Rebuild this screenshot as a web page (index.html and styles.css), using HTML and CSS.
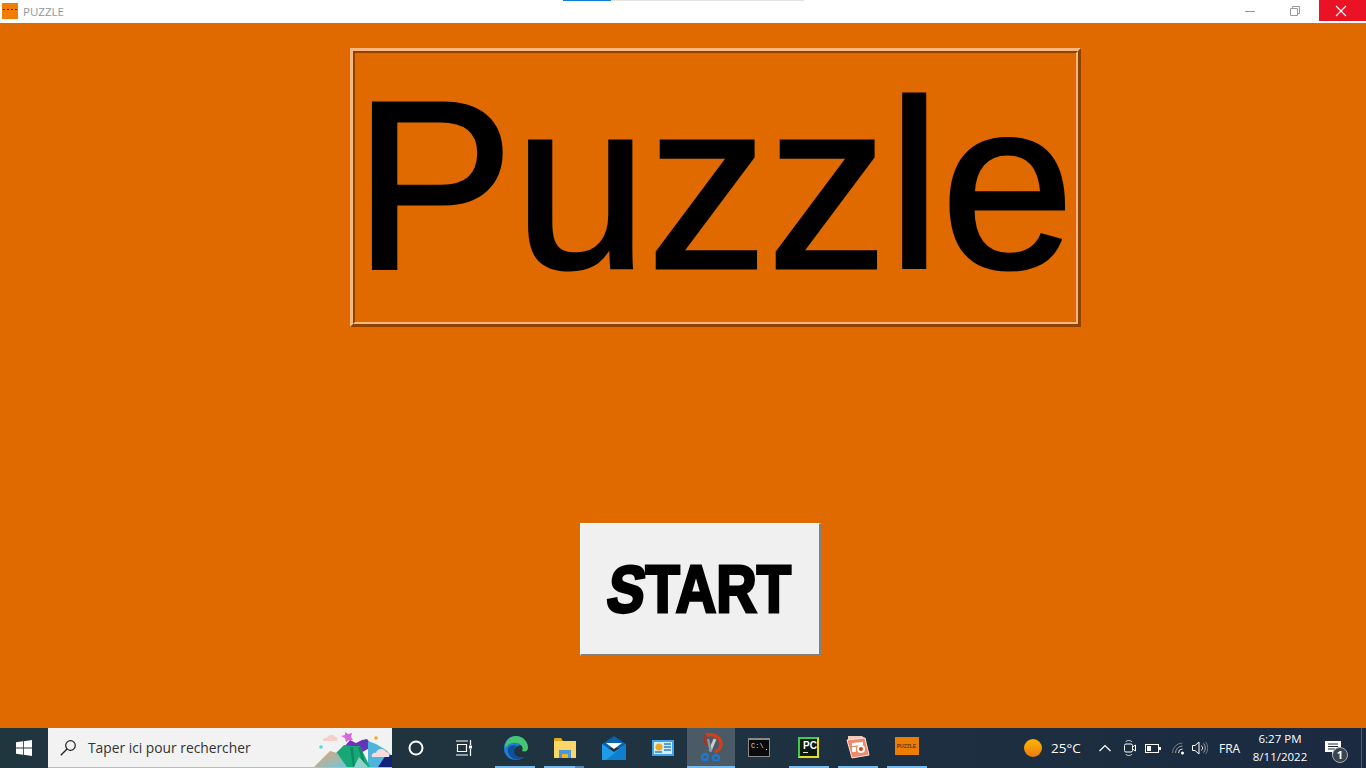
FILE: index.html
```html
<!DOCTYPE html>
<html lang="en">
<head>
    <meta charset="UTF-8">
    <meta name="viewport" content="width=device-width, initial-scale=1.0">
    <title>PUZZLE</title>
    <link rel="stylesheet" href="styles.css">
</head>
<body>
    <header class="titlebar">
        <div class="app-icon"><i></i><i></i><i></i><i></i></div>
        <span class="app-title">PUZZLE</span>
        <div class="progress"><span class="progress-done"></span></div>
        <div class="win-controls">
            <button class="win-btn" aria-label="Minimize"><svg width="12" height="12" viewBox="0 0 12 12"><path d="M1 6.500h10" stroke="#999" fill="none"/></svg></button>
            <button class="win-btn" aria-label="Restore"><svg width="12" height="12" viewBox="0 0 12 12"><path d="M1.500 3.500h7v7h-7zM3.500 3.500V1.500h7v7H8.500" stroke="#999" fill="none"/></svg></button>
            <button class="win-btn win-close" aria-label="Close"><svg width="12" height="12" viewBox="0 0 12 12"><path d="M1 1l10 10M11 1L1 11" stroke="#fff" stroke-width="1.100" fill="none"/></svg></button>
        </div>
    </header>

    <main class="game">
        <div class="title-box">
            <h1 class="title-inner">Puzzle</h1>
        </div>
        <button class="start-btn"><span class="start-text"><span class="start-s">S</span>TART</span></button>
    </main>

    <footer class="taskbar">
        <div class="tb-start">
            <svg width="16" height="16" viewBox="0 0 16 16"><path fill="#fff" d="M0 2.300L7 1.300V7.600H0zM7.800 1.200L16 0V7.600H7.800zM0 8.400H7V14.700L0 13.700zM7.800 8.400H16V16L7.800 14.800z"/></svg>
        </div>
        <div class="search">
            <svg class="search-icon" width="16" height="16" viewBox="0 0 16 16"><circle cx="10.500" cy="5.500" r="4.800" fill="none" stroke="#222" stroke-width="1.200"/><path d="M7 9L.8 15.300" stroke="#222" stroke-width="1.300"/></svg>
            <span class="search-text">Taper ici pour rechercher</span>
            <svg class="search-art" width="78" height="40" viewBox="0 0 78 40">
                <defs>
                    <linearGradient id="slope" x1="0" y1="0" x2="1" y2="1">
                        <stop offset="0" stop-color="#eba070"/>
                        <stop offset="1" stop-color="#6fc8d8"/>
                    </linearGradient>
                    <linearGradient id="peak" x1="0" y1="0" x2="1" y2="0">
                        <stop offset="0" stop-color="#7a30c0"/>
                        <stop offset="1" stop-color="#5a38b0"/>
                    </linearGradient>
                </defs>
                <path fill="#f3cfcb" d="M9 14c0-3 2-4 4-3 2-4 7-4 8-1 2 0 3 2 2 4z"/>
                <path fill="#d868e0" d="M31 5l3 2 4-1-1 4 2 3-4 0-3 2-1-4-4-2 4-1z"/>
                <circle cx="62" cy="11" r="1.800" fill="#f5a623"/>
                <circle cx="7" cy="20" r="1.800" fill="#4fd8ec"/>
                <path fill="url(#peak)" d="M30 20l6-7 6 3 6-3 5-1 6 7-14 8z"/>
                <path fill="#4eb4dc" d="M54 14l8 3 10 6 6 6v11H54z"/>
                <path fill="#13237a" d="M64 40l8-12 6 0v12z"/>
                <path fill="#18a878" d="M21 27l9-9 8 1 8 0 10 21H30z"/>
                <path fill="#0f8a60" d="M36 20l3 20h2l-2-20zM44 20l6 20h2l-5-20z"/>
                <path fill="url(#slope)" d="M0 40L16 24l7 2 10 14z"/>
                <path fill="#8fd4cc" d="M40 40l5-10 9 10z"/>
                <path fill="#f6dcdc" d="M58 30c-1-3 2-5 4-4 1-5 9-5 10-1 3 0 4 3 3 5z"/>
            </svg>
        </div>
        <div class="tb-cell">
            <svg width="16" height="16" viewBox="0 0 16 16"><circle cx="8" cy="8" r="6.500" fill="none" stroke="#fff" stroke-width="2"/></svg>
        </div>
        <div class="tb-cell tb-taskview">
            <svg width="18" height="16" viewBox="0 0 18 16"><path d="M1 1h12M1 15h12M2.500 4.500h9v7h-9z" stroke="#fff" fill="none" stroke-width="1.200"/><path d="M15.500 0v5M15.500 9v7" stroke="#fff" stroke-width="1.200"/><rect x="14" y="5.500" width="3" height="3" fill="#fff"/></svg>
        </div>

        <div class="tb-apps">
            <div class="app app-open">
                <svg width="24" height="24" viewBox="0 0 24 24"><path fill="#1c7fd0" d="M12 0C5 0 0 5 0 12c0 7 5 12 12 12 3 0 6-1 8-3-4 1-9 0-10-4-1-3 1-6 4-7 3-1 6 0 10 2 0-7-5-12-12-12z"/><path fill="#46c66e" d="M12 0c6 0 12 5 12 12 0 3-3 4-6 3 1-2 1-4-1-6C14 6 8 6 4 9 3 10 2 11 1 12 1 5 6 0 12 0z"/><path fill="#0f4e9e" d="M10 17c1 4 6 5 10 4-4 4-11 3-14-1-3-4-3-8 0-10 2-1 6-1 7 0-2 1-4 4-3 7z"/></svg>
            </div>
            <div class="app app-open app-stack">
                <svg width="22" height="20" viewBox="0 0 22 20"><path fill="#e0a81c" d="M0 1a1 1 0 011-1h6l2 3h-9z"/><path fill="#fbd667" d="M0 3h22v17H0z"/><path fill="#4a98dc" d="M5 20v-8h12v8h-3v-4H8v4z"/><path fill="#f0b429" d="M8 16h6v4H8z"/></svg>
            </div>
            <div class="app">
                <svg width="24" height="24" viewBox="0 0 24 24"><path fill="#0a62ac" d="M12 0l12 8v4H0V8z"/><path fill="#fff" d="M4 7h16l-8 6z"/><path fill="#1f9be8" d="M0 8l12 8 12-8v16H0z"/><path fill="#0e7fcf" d="M24 8v16H4z"/></svg>
            </div>
            <div class="app">
                <svg width="22" height="18" viewBox="0 0 22 18"><rect width="22" height="16" y="1" fill="#3fa4e4"/><rect x="2" y="3" width="18" height="12" fill="#d5ecfa"/><circle cx="7" cy="8" r="3.500" fill="#f0a820"/><path d="M12 5h7M12 8h7M12 11h7M3 13h7" stroke="#2a82c8" stroke-width="1.500"/></svg>
            </div>
            <div class="app app-active">
                <svg width="24" height="28" viewBox="0 0 24 28"><path fill="none" stroke="#d0401c" stroke-width="3.500" d="M7 2c8-2 15 3 15 9 0 4-3 7-6 8"/><path fill="none" stroke="#b03018" stroke-width="2.500" d="M7 3C5 6 6 10 8 12"/><path stroke="#c8ccd0" stroke-width="3" d="M16 6l-5 12"/><path stroke="#8a9298" stroke-width="2.500" d="M9 6l3 13"/><circle cx="6" cy="24" r="3" fill="none" stroke="#1f78d0" stroke-width="2.400"/><circle cx="17" cy="25" r="3" fill="none" stroke="#1f78d0" stroke-width="2.400"/></svg>
            </div>
            <div class="app">
                <div class="cmd-icon"><span class="cmd-text">C:\</span><i></i></div>
            </div>
            <div class="app app-open">
                <div class="pc-icon"><span class="pc-text">PC</span><i></i></div>
            </div>
            <div class="app app-open">
                <svg class="ppt-icon" width="24" height="24" viewBox="0 0 24 24"><path fill="#f5c8b8" d="M2 1h14l4 3v4H2z"/><path fill="#f08a6a" stroke="#fbe2d8" d="M1 5l18-2 4 17-17 3z"/><path fill="#fff" d="M6 8l11-1v3l-11 1zM6 12h4v5H6z"/><circle cx="15" cy="14" r="4" fill="#fff"/><circle cx="15" cy="14" r="2" fill="#d8401c"/></svg>
            </div>
            <div class="app app-open">
                <div class="puzzle-icon"><span class="puzzle-text">PUZZLE</span></div>
            </div>
        </div>

        <div class="tray">
            <span class="sun"></span>
            <span class="temp">25°C</span>
            <svg class="tray-chevron" width="12" height="8" viewBox="0 0 12 8"><path d="M.5 7L6 1.500 11.500 7" fill="none" stroke="#fff" stroke-width="1.200"/></svg>
            <svg class="tray-meet" width="12" height="18" viewBox="0 0 12 18"><path d="M2 3c0-2 5-2 6 0M2 15c0 2 5 2 6 0" fill="none" stroke="#ddd"/><rect x=".5" y="5" width="8" height="8" rx="1.500" fill="none" stroke="#fff"/><path d="M8.500 8l3-2v6l-3-2z" fill="none" stroke="#fff"/></svg>
            <svg class="tray-battery" width="16" height="9" viewBox="0 0 16 9"><rect x=".5" y=".5" width="13" height="8" fill="none" stroke="#fff"/><rect x="2" y="2" width="4" height="5" fill="#fff"/><rect x="14" y="3" width="2" height="3" fill="#fff"/></svg>
            <svg class="tray-wifi" width="14" height="14" viewBox="0 0 14 14"><circle cx="10.500" cy="12" r="1.500" fill="#fff"/><path d="M6.500 12a4 4 0 014-4" fill="none" stroke="#ddd"/><path d="M3.500 12a7 7 0 017-7" fill="none" stroke="#999"/><path d="M.5 12a10 10 0 0110-10" fill="none" stroke="#777"/></svg>
            <svg class="tray-sound" width="16" height="14" viewBox="0 0 16 14"><path d="M.5 4.500h2.500l4-3.500v12l-4-3.500H.5z" fill="none" stroke="#fff"/><path d="M9.500 4.500a3.500 3.500 0 010 5" fill="none" stroke="#ddd"/><path d="M11.500 2.500a6.500 6.500 0 010 9" fill="none" stroke="#aaa"/><path d="M13.500 1a9 9 0 010 12" fill="none" stroke="#777"/></svg>
            <span class="lang">FRA</span>
            <div class="clock"><span>6:27 PM</span><span>8/11/2022</span></div>
            <div class="notif">
                <svg width="16" height="15" viewBox="0 0 16 15"><path fill="#fff" d="M0 0h16v11h-6l-3 4v-4H0z"/><path d="M3 3h10M3 5.500h10M3 8h7" stroke="#1c2b40"/></svg>
                <span class="notif-badge">1</span>
            </div>
            <div class="show-desktop"></div>
        </div>
    </footer>
</body>
</html>
```

FILE: styles.css
```css
* {
    box-sizing: border-box;
}

html, body {
    height: 100%;
}

body {
    margin: 0;
    display: flex;
    flex-direction: column;
    overflow: hidden;
    font-family: 'Open Sans', 'Noto Sans', sans-serif;
    background-color: #e06a00;
}

/* title bar */
.titlebar {
    height: 23px;
    flex: none;
    position: relative;
    display: flex;
    align-items: flex-start;
    background-color: #fff;
}

.app-icon {
    width: 16px;
    height: 16px;
    margin: 3px 0 0 2px;
    padding-top: 6px;
    display: flex;
    justify-content: center;
    gap: 2px;
    background-color: #f07c00;
}

.app-icon i {
    width: 2px;
    height: 1px;
    background-color: #2a2a50;
}

.app-title {
    margin: 3px 0 0 5px;
    font-size: 11.5px;
    line-height: 17px;
    color: #8e98a4;
}

.progress {
    position: absolute;
    left: 563px;
    top: 0;
    width: 241px;
    height: 1px;
    background-color: #e3e3e3;
}

.progress-done {
    display: block;
    width: 48px;
    height: 100%;
    background-color: #0a7fdc;
}

.win-controls {
    margin-left: auto;
    display: flex;
}

.win-btn {
    width: 46px;
    height: 21px;
    padding: 0;
    border: none;
    display: flex;
    align-items: center;
    justify-content: center;
    background: none;
}

.win-btn svg {
    margin-top: 1px;
}

.win-btn:first-child {
    margin-right: -1px;
}

.win-close {
    margin-left: 1px;
    width: 47px;
    padding-right: 3px;
    background-color: #ea1326;
}

/* game area */
.game {
    flex: 1;
    display: flex;
    flex-direction: column;
    align-items: flex-start;
    padding-top: 25px;
}

.title-box {
    width: 731px;
    height: 279px;
    margin-left: 350px;
    border: 3px solid;
    border-color: #ffb680 #8f4300 #8f4300 #ffb680;
}

.title-inner {
    height: 100%;
    margin: 0;
    padding: 0 3px 6px 0;
    border: 2px solid;
    border-color: #8f4300 #ffb680 #ffb680 #8f4300;
    display: flex;
    justify-content: center;
    align-items: center;
    overflow: visible;
    font-family: 'Liberation Sans', Arial, sans-serif;
    font-weight: normal;
    font-size: 240px;
    line-height: 1;
    color: #000;
    -webkit-text-stroke: 3px #000;
}

.start-btn {
    width: 241px;
    height: 133px;
    margin: 196px 0 0 580px;
    padding: 0;
    border: solid;
    border-width: 1px 2px 2px 1px;
    border-color: #fff #808080 #808080 #fff;
    background-color: #f0f0f0;
    display: flex;
    align-items: center;
    justify-content: center;
}

.start-text {
    display: inline-block;
    transform: scaleX(.85);
    font-family: 'Liberation Sans', Arial, sans-serif;
    font-weight: bold;
    font-size: 66px;
    line-height: 1;
    color: #000;
    -webkit-text-stroke: 3px #000;
}

.start-s {
    display: inline-block;
    transform: skewX(-10deg);
}

/* taskbar */
.taskbar {
    height: 40px;
    flex: none;
    display: flex;
    align-items: stretch;
    color: #fff;
    background: linear-gradient(90deg, #20363f 0%, #1f3340 45%, #1b2a40 100%);
}

.tb-start {
    width: 48px;
    display: flex;
    align-items: center;
    justify-content: center;
}

.search {
    width: 344px;
    display: flex;
    align-items: center;
    background-color: #f2f2f2;
    border-bottom: 1px solid #bbb;
}

.search-icon {
    margin-left: 12px;
}

.search-text {
    margin-left: 12px;
    font-size: 13.8px;
    color: #333;
    white-space: nowrap;
}

.search-art {
    margin-left: auto;
    align-self: flex-end;
}

.tb-cell {
    width: 48px;
    display: flex;
    align-items: center;
    justify-content: center;
}

.tb-taskview {
    margin-right: 3px;
}

.tb-apps {
    display: flex;
}

.app {
    width: 49px;
    position: relative;
    display: flex;
    align-items: center;
    justify-content: center;
}

.app-open::after {
    content: "";
    position: absolute;
    left: 4px;
    right: 5px;
    bottom: 0;
    height: 2px;
    background-color: #76b9ed;
}

.app-stack::after {
    background: linear-gradient(90deg, #76b9ed 78%, #4f86ad 78%);
}

.app-active {
    width: 48px;
    margin-right: 1px;
    background-color: #4a5a66;
    border-bottom: 2px solid #76b9ed;
}

.cmd-icon {
    width: 22px;
    height: 19px;
    margin: -2px 3px 0 0;
    padding: 3px 2px;
    display: flex;
    align-items: flex-start;
    gap: 2px;
    border: 1px solid #8a8a8a;
    border-top-width: 2px;
    background-color: #0a0a0a;
}

.cmd-text {
    font-family: 'Liberation Mono', monospace;
    font-size: 7px;
    color: #ddd;
    line-height: 1;
}

.cmd-icon i {
    width: 7px;
    height: 1px;
    margin-top: 6px;
    background-color: #eee;
}

.pc-icon {
    width: 21px;
    height: 21px;
    margin: -2px 2px 0 0;
    padding: 2px 3px;
    display: flex;
    flex-direction: column;
    gap: 2px;
    border: 2px solid;
    border-color: #3ecb4a #e6e01c #e6e01c #3ecb4a;
    background-color: #0c1a10;
}

.pc-text {
    font-family: 'Liberation Sans', sans-serif;
    font-size: 10px;
    font-weight: bold;
    line-height: 9px;
    color: #fff;
}

.pc-icon i {
    width: 5px;
    height: 1px;
    background-color: #ddd;
}

.ppt-icon {
    margin: -2px 2px 0 0;
}

.puzzle-icon {
    width: 24px;
    height: 18px;
    margin: -4px 2px 0 0;
    display: flex;
    align-items: center;
    justify-content: center;
    background-color: #ed7d00;
}

.puzzle-text {
    font-family: 'Liberation Sans', sans-serif;
    font-size: 5px;
    font-weight: bold;
    color: #5a3a20;
}

.tray {
    margin-left: auto;
    display: flex;
    align-items: center;
}

.sun {
    width: 18px;
    height: 18px;
    border-radius: 50%;
    background: linear-gradient(180deg, #fcb900, #ee7a10);
}

.temp {
    width: 29px;
    margin-left: 9px;
    font-size: 13.5px;
    white-space: nowrap;
}

.tray-chevron {
    margin-left: 19px;
}

.tray-meet {
    margin-left: 13px;
}

.tray-battery {
    margin-left: 9px;
}

.tray-wifi {
    margin-left: 11px;
}

.tray-sound {
    margin-left: 6px;
}

.lang {
    width: 24px;
    margin-left: 11px;
    font-size: 12px;
}

.clock {
    width: 60px;
    margin: 0 5px 0 7px;
    display: flex;
    flex-direction: column;
    align-items: center;
    gap: 2px;
    font-size: 11.5px;
    line-height: 16px;
    white-space: nowrap;
}

.notif {
    width: 46px;
    height: 100%;
    position: relative;
    display: flex;
    align-items: center;
    justify-content: center;
    padding-right: 10px;
}

.notif-badge {
    position: absolute;
    left: 17px;
    top: 19px;
    width: 16px;
    height: 16px;
    border-radius: 50%;
    background-color: #3a4450;
    border: 1px solid #aaa;
    font-size: 11px;
    font-weight: 700;
    line-height: 14px;
    text-align: center;
}

.show-desktop {
    width: 5px;
    height: 100%;
    border-left: 1px solid #4c5866;
}
```
